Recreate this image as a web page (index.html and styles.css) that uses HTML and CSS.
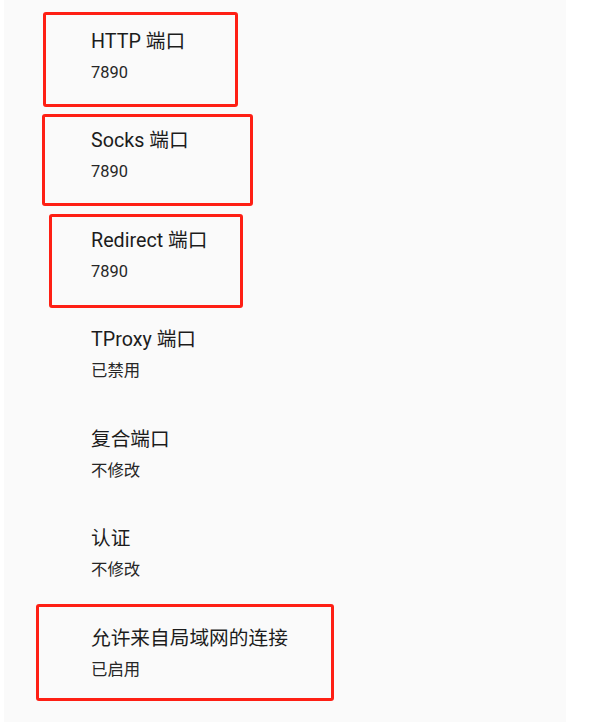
FILE: index.html
```html
<!DOCTYPE html>
<html lang="zh-CN">
<head>
<meta charset="utf-8">
<title>设置</title>
<link rel="stylesheet" href="styles.css">
</head>
<body>
<div class="panel">
  <ul class="prefs">
    <li class="pref"><div class="title">HTTP 端口</div><div class="summary">7890</div></li>
    <li class="pref"><div class="title">Socks 端口</div><div class="summary">7890</div></li>
    <li class="pref"><div class="title">Redirect 端口</div><div class="summary">7890</div></li>
    <li class="pref"><div class="title">TProxy 端口</div><div class="summary">已禁用</div></li>
    <li class="pref"><div class="title">复合端口</div><div class="summary">不修改</div></li>
    <li class="pref"><div class="title">认证</div><div class="summary">不修改</div></li>
    <li class="pref"><div class="title">允许来自局域网的连接</div><div class="summary">已启用</div></li>
  </ul>
  <div class="mark mark-http"></div>
  <div class="mark mark-socks"></div>
  <div class="mark mark-redirect"></div>
  <div class="mark mark-lan"></div>
</div>
</body>
</html>
```

FILE: styles.css
```css
html, body {
  margin: 0;
  padding: 0;
  background: #ffffff;
}
body {
  font-family: Roboto, "Noto Sans CJK SC", sans-serif;
  color: #1c1c1c;
  width: 611px;
  height: 722px;
  overflow: hidden;
}
.panel {
  position: relative;
  margin-left: 4px;
  width: 562px;
  height: 722px;
  background: #fafafa;
}
.prefs {
  list-style: none;
  margin: 0;
  padding: 6.5px 0 0 0;
}
.pref {
  height: 99.5px;
  display: flex;
  flex-direction: column;
  justify-content: center;
  padding-left: 87px;
  box-sizing: border-box;
}
.title {
  font-size: 19.7px;
  line-height: 26px;
  color: #1c1c1c;
}
.summary {
  margin-top: 7px;
  font-size: 16.4px;
  line-height: 22px;
  color: #262626;
}
.mark {
  position: absolute;
  border: 3px solid #fe1f14;
  border-radius: 3px;
  box-sizing: border-box;
}
.mark-http { left: 39px; top: 12px; width: 195px; height: 95px; }
.mark-socks { left: 38px; top: 114px; width: 211px; height: 92px; }
.mark-redirect { left: 45px; top: 214px; width: 194px; height: 94px; }
.mark-lan { left: 32px; top: 604px; width: 298px; height: 97px; }
```
